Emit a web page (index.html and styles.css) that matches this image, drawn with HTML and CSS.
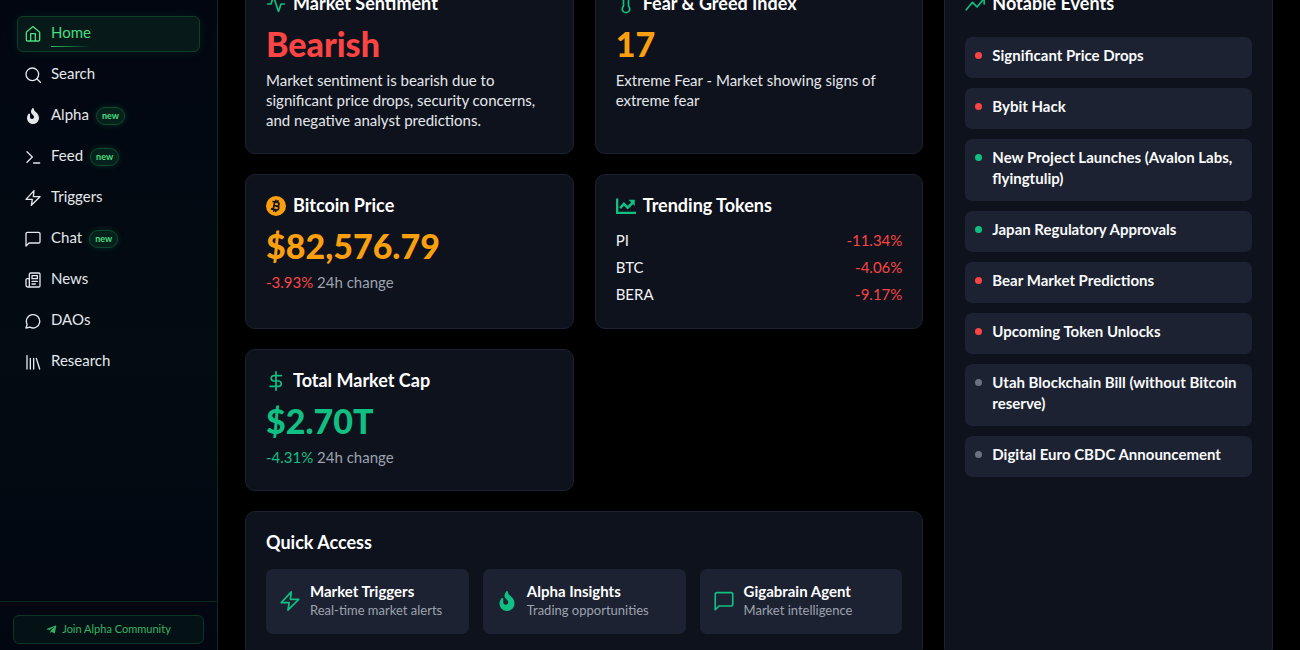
FILE: index.html
```html
<!DOCTYPE html>
<html lang="en">
<head>
<meta charset="utf-8">
<meta name="viewport" content="width=device-width, initial-scale=1">
<title>Market Overview</title>
<link rel="stylesheet" href="styles.css">
</head>
<body>
<svg class="sprite" aria-hidden="true">
  <symbol id="i-home" viewBox="0 0 24 24"><path d="M2 10.200a2 2 0 0 1 .7-1.500l8-7a2 2 0 0 1 2.600 0l8 7a2 2 0 0 1 .7 1.500V20.500a2 2 0 0 1-2 2H4a2 2 0 0 1-2-2z"/><path d="M8.500 22V11.500h7V22"/></symbol>
  <symbol id="i-search" viewBox="0 0 24 24"><circle cx="11" cy="11" r="9.500"/><path d="m18 18 5 5"/></symbol>
  <symbol id="i-fire" viewBox="0 0 384 512"><path fill="currentColor" stroke="none" d="M216 23.860c0-23.800-30.650-32.770-44.150-13.040C48 191.850 224 200 224 288c0 35.630-29.110 64.460-64.850 63.990-35.170-.450-63.150-29.770-63.150-64.940v-85.510c0-21.700-26.470-32.230-41.430-16.500C27.800 213.160 0 261.330 0 320c0 105.870 86.130 192 192 192s192-86.130 192-192c0-170.290-168-193-168-296.140z"/></symbol>
  <symbol id="i-terminal" viewBox="0 0 24 24"><path d="m3 4 8 8-8 8M13 21h9"/></symbol>
  <symbol id="i-bolt" viewBox="0 0 24 24"><path d="M13.500 1 1.500 14h9.500l-1.500 9L22.500 10h-10z"/></symbol>
  <symbol id="i-chat" viewBox="0 0 24 24"><path d="M1.500 22.500V4a2 2 0 0 1 2-2h17a2 2 0 0 1 2 2v12a2 2 0 0 1-2 2H6z"/></symbol>
  <symbol id="i-news" viewBox="0 0 24 24"><path d="M4 22.500h16.500a2 2 0 0 0 2-2V3.500a2 2 0 0 0-2-2h-12a2 2 0 0 0-2 2v17a2 2 0 0 1-2.500 2 2.500 2.500 0 0 1-2.500-2.500v-8a2 2 0 0 1 2-2h3M10.500 14h8M10.500 18h5"/><path d="M10.500 5.500h8v4.500h-8z"/></symbol>
  <symbol id="i-bubble" viewBox="0 0 24 24"><path d="M7.500 21.300A10 10 0 1 0 3.200 17L1.500 22.500z"/></symbol>
  <symbol id="i-library" viewBox="0 0 24 24"><path d="M3 2.500v20M8 6.500v16M13 6.500v16M17 6.500l5 16"/></symbol>
  <symbol id="i-plane" viewBox="0 0 448 512"><path fill="currentColor" stroke="none" d="M446.700 98.600l-67.600 318.800c-5.100 22.500-18.400 28.100-37.300 17.500l-103-75.900-49.700 47.800c-5.500 5.500-10.100 10.100-20.700 10.100l7.400-104.900 190.900-172.500c8.300-7.400-1.800-11.500-12.900-4.100L117.800 284 16.200 252.200c-22.100-6.900-22.500-22.100 4.600-32.700L418.200 66.400c18.400-6.900 34.500 4.100 28.500 32.200z"/></symbol>
  <symbol id="i-pulse" viewBox="0 0 24 24"><path d="M2 12h4l3-9 6 18 3-9h4"/></symbol>
  <symbol id="i-thermo" viewBox="0 0 24 24"><path d="M15 14.500V4.500a3 3 0 0 0-6 0v10a4.500 4.500 0 1 0 6 0z"/></symbol>
  <symbol id="i-bitcoin" viewBox="0 0 24 24"><circle cx="12" cy="12" r="12" fill="currentColor" stroke="none"/><g stroke="#0f131e" transform="rotate(12 12 12)"><path d="M9.500 7.500v9M7.500 7.500H13a2.200 2.200 0 0 1 0 4.400H9.500M13 11.900h.5a2.300 2.300 0 0 1 0 4.600h-6M10.500 5.500v2M13 5.500v2M10.500 16.500v2M13 16.500v2"/></g></symbol>
  <symbol id="i-chart" viewBox="0 0 24 24"><path stroke-width="2.800" stroke-linecap="butt" stroke-linejoin="miter" d="M1.400 3v17.300H24"/><path stroke-width="3" stroke-linejoin="miter" stroke-linecap="butt" d="m5 14.500 4.500-5 4.500 4.500 6.500-6.500"/><path fill="currentColor" stroke="none" d="M15 4.500H22.500V12z"/></symbol>
  <symbol id="i-dollar" viewBox="0 0 24 24"><path d="M12 1v22M18.500 5.500H9a3.300 3.300 0 0 0 0 6.500h6.500a3.300 3.300 0 0 1 0 6.500H5"/></symbol>
  <symbol id="i-trend" viewBox="0 0 24 24"><path d="m1.500 19 7.500-9 5.500 5.500L22.500 6M16.500 5.500h6.500v6.500"/></symbol>
</svg>

<div class="app">
  <aside class="sidebar">
    <nav class="nav" aria-label="Main">
      <a class="nav-item active" href="#"><svg class="icon"><use href="#i-home"/></svg><span class="nav-label">Home</span></a>
      <a class="nav-item" href="#"><svg class="icon"><use href="#i-search"/></svg><span>Search</span></a>
      <a class="nav-item" href="#"><svg class="icon"><use href="#i-fire"/></svg><span>Alpha</span><span class="badge">new</span></a>
      <a class="nav-item" href="#"><svg class="icon"><use href="#i-terminal"/></svg><span>Feed</span><span class="badge">new</span></a>
      <a class="nav-item" href="#"><svg class="icon"><use href="#i-bolt"/></svg><span>Triggers</span></a>
      <a class="nav-item" href="#"><svg class="icon"><use href="#i-chat"/></svg><span>Chat</span><span class="badge">new</span></a>
      <a class="nav-item" href="#"><svg class="icon"><use href="#i-news"/></svg><span>News</span></a>
      <a class="nav-item" href="#"><svg class="icon"><use href="#i-bubble"/></svg><span>DAOs</span></a>
      <a class="nav-item" href="#"><svg class="icon"><use href="#i-library"/></svg><span>Research</span></a>
    </nav>
    <div class="sidebar-foot">
      <a class="join" href="#"><svg class="icon"><use href="#i-plane"/></svg>Join Alpha Community</a>
    </div>
  </aside>

  <main class="main">
    <div class="grid">
      <section class="card">
        <h2 class="title"><svg class="icon"><use href="#i-pulse"/></svg>Market Sentiment</h2>
        <p class="value red">Bearish</p>
        <p class="text">Market sentiment is bearish due to significant price drops, security concerns, and negative analyst predictions.</p>
      </section>
      <section class="card">
        <h2 class="title"><svg class="icon"><use href="#i-thermo"/></svg>Fear &amp; Greed Index</h2>
        <p class="value amber">17</p>
        <p class="text">Extreme Fear - Market showing signs of extreme fear</p>
      </section>
      <section class="card events">
        <h2 class="title"><svg class="icon"><use href="#i-trend"/></svg>Notable Events</h2>
        <ul class="event-list">
          <li class="event"><span class="dot bad"></span>Significant Price Drops</li>
          <li class="event"><span class="dot bad"></span>Bybit Hack</li>
          <li class="event"><span class="dot good"></span>New Project Launches (Avalon Labs, flyingtulip)</li>
          <li class="event"><span class="dot good"></span>Japan Regulatory Approvals</li>
          <li class="event"><span class="dot bad"></span>Bear Market Predictions</li>
          <li class="event"><span class="dot bad"></span>Upcoming Token Unlocks</li>
          <li class="event"><span class="dot"></span>Utah Blockchain Bill (without Bitcoin reserve)</li>
          <li class="event"><span class="dot"></span>Digital Euro CBDC Announcement</li>
        </ul>
      </section>
      <section class="card">
        <h2 class="title"><svg class="icon amber"><use href="#i-bitcoin"/></svg>Bitcoin Price</h2>
        <p class="value amber">$82,576.79</p>
        <p class="text muted"><span class="red">-3.93%</span> 24h change</p>
      </section>
      <section class="card">
        <h2 class="title"><svg class="icon"><use href="#i-chart"/></svg>Trending Tokens</h2>
        <dl class="tokens">
          <div class="token"><dt>PI</dt><dd>-11.34%</dd></div>
          <div class="token"><dt>BTC</dt><dd>-4.06%</dd></div>
          <div class="token"><dt>BERA</dt><dd>-9.17%</dd></div>
        </dl>
      </section>
      <section class="card">
        <h2 class="title"><svg class="icon"><use href="#i-dollar"/></svg>Total Market Cap</h2>
        <p class="value green">$2.70T</p>
        <p class="text muted"><span class="green">-4.31%</span> 24h change</p>
      </section>
      <section class="card quick">
        <h2 class="title">Quick Access</h2>
        <div class="tiles">
          <a class="tile" href="#"><svg class="icon"><use href="#i-bolt"/></svg><span class="tile-text"><strong>Market Triggers</strong><small>Real-time market alerts</small></span></a>
          <a class="tile" href="#"><svg class="icon"><use href="#i-fire"/></svg><span class="tile-text"><strong>Alpha Insights</strong><small>Trading opportunities</small></span></a>
          <a class="tile" href="#"><svg class="icon"><use href="#i-chat"/></svg><span class="tile-text"><strong>Gigabrain Agent</strong><small>Market intelligence</small></span></a>
        </div>
      </section>
    </div>
  </main>
</div>
</body>
</html>
```
FILE: styles.css
```css
* { box-sizing: border-box; }

body {
  margin: 0;
  background: #000;
  color: #e5e7eb;
  font: 15px/20px Lato, "Open Sans", sans-serif;
}

h2, p, ul, dl, dd { margin: 0; }
ul { padding: 0; list-style: none; }
a { color: inherit; text-decoration: none; }

.sprite { display: none; }

.icon {
  flex: none;
  width: 16px;
  height: 16px;
  fill: none;
  stroke: currentColor;
  stroke-width: 2;
  stroke-linecap: round;
  stroke-linejoin: round;
}

.app {
  display: flex;
  height: 100vh;
  overflow: hidden;
}

/* Sidebar */
.sidebar {
  display: flex;
  flex: none;
  flex-direction: column;
  width: 218px;
  border-right: 1px solid #0b2a20;
  background: linear-gradient(#020611, #030c12 55%, #020611);
}

.nav {
  display: flex;
  flex: 1;
  flex-direction: column;
  gap: 5px;
  padding: 16px 17px;
}

.nav-item {
  display: flex;
  align-items: center;
  gap: 10px;
  height: 36px;
  padding: 0 7px 4px;
  border: 1px solid transparent;
  border-radius: 6px;
}

.nav-item .icon { margin-top: 3px; }

.nav-item.active {
  border-color: #0d3f28;
  background: #071a19;
  color: #4ade80;
  box-shadow: 0 0 12px #22c55e1a;
}

.nav-label { position: relative; }

.nav-label::after {
  content: "";
  position: absolute;
  right: 0;
  bottom: -5px;
  left: 0;
  height: 1px;
  background: linear-gradient(90deg, #22c55e, transparent);
}

.badge {
  height: 18px;
  margin: 3px 0 0 -3px;
  padding: 0 5px;
  border: 1px solid #0e4a2d;
  border-radius: 9px;
  background: #06201b;
  box-shadow: 0 0 6px #22c55e33;
  color: #4ade80;
  font: 700 9px/15px Lato, sans-serif;
}

.sidebar-foot {
  padding: 13px;
  padding-bottom: 6px;
  border-top: 1px solid #0a2a20;
}

.join {
  display: flex;
  align-items: center;
  justify-content: center;
  gap: 5px;
  height: 29px;
  padding-bottom: 1px;
  border: 1px solid #0d3425;
  border-radius: 6px;
  background: #051215;
  color: #35b365;
  font-size: 11px;
}

.join .icon { width: 11px; height: 11px; }

/* Dashboard */
.main {
  flex: 1;
  min-width: 0;
  padding: 0 27px;
}

.grid {
  display: grid;
  grid-template-columns: repeat(3, minmax(0, 1fr));
  gap: 20px 21px;
  margin-top: -28px;
}

.card {
  padding: 19px 20px 23px;
  border: 1px solid #1a2231;
  border-radius: 10px;
  background: #0e121d;
}

.events {
  grid-column: 3;
  grid-row: 1 / span 4;
}

.quick { grid-column: 1 / span 2; }

.title {
  display: flex;
  align-items: center;
  gap: 7px;
  color: #fff;
  font-size: 18px;
  font-weight: 700;
  line-height: 22px;
}

.title .icon {
  width: 20px;
  height: 20px;
  margin-top: 2px;
  color: #10c082;
}

.value {
  margin: 10px 0 6px;
  font-size: 34px;
  font-weight: 900;
  line-height: 40px;
}

.muted { color: #9ca3af; }
.red { color: #fb4444; }
.green { color: #10c082; }
.amber, .title .amber { color: #faa00f; }

.tokens {
  display: grid;
  gap: 6px;
  margin-top: 14px;
}

.token {
  display: flex;
  justify-content: space-between;
  line-height: 21px;
}

.token dt { color: #f3f4f6; }
.token dd { color: #fb4444; }

.event-list {
  display: grid;
  gap: 10px;
  margin-top: 23px;
}

.event {
  display: flex;
  gap: 10px;
  padding: 8px 10px 12px;
  border-radius: 7px;
  background: #1c2231;
  color: #f9fafb;
  font-weight: 700;
  line-height: 21px;
}

.dot {
  flex: none;
  width: 7px;
  height: 7px;
  margin-top: 7px;
  border-radius: 50%;
  background: #6b7280;
}

.dot.bad { background: #fb4444; }
.dot.good { background: #10c082; }

.tiles {
  display: grid;
  grid-template-columns: repeat(3, minmax(0, 1fr));
  gap: 14px;
  margin-top: 16px;
}

.tile {
  display: flex;
  align-items: center;
  gap: 10px;
  padding: 12px 14px 15px;
  border-radius: 7px;
  background: #1c2231;
}

.tile .icon {
  width: 20px;
  height: 20px;
  margin-top: 2px;
  color: #10c082;
}

.tile-text { display: grid; }

.tile strong {
  color: #fff;
  font-size: 15px;
  line-height: 20px;
}

.tile small {
  color: #9ca3af;
  font-size: 13px;
  line-height: 18px;
}
```
